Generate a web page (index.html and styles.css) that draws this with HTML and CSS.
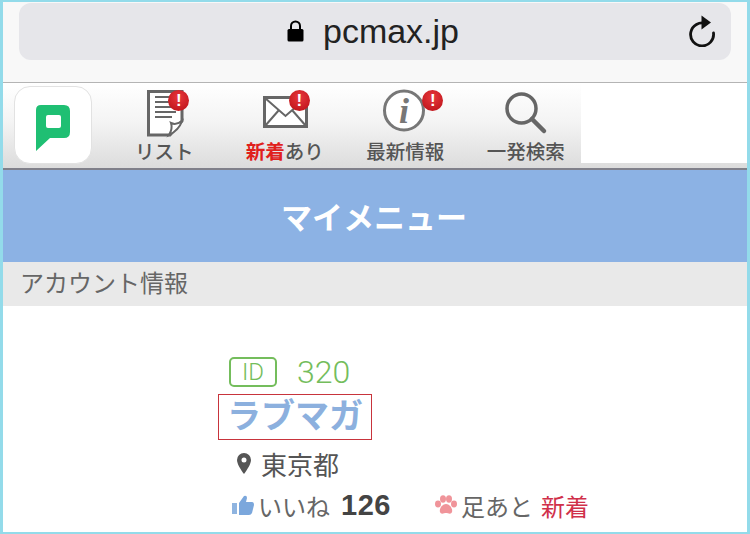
FILE: index.html
```html
<!DOCTYPE html>
<html lang="ja">
<head>
    <meta charset="UTF-8">
    <meta name="viewport" content="width=device-width, initial-scale=1.0">
    <title>pcmax.jp</title>
    <link rel="stylesheet" href="styles.css">
</head>
<body>
    <div class="frame">
        <div class="browser-bar">
            <div class="url-pill">
                <div class="url-text">
                    <svg class="lock" viewBox="0 0 17 22" width="17" height="22">
                        <path d="M4 10V6a4.500 4.500 0 0 1 9 0v4" fill="none" stroke="#000" stroke-width="2"/>
                        <rect x="0.500" y="9" width="16" height="12.500" rx="1.500" fill="#000"/>
                    </svg>
                    <span>pcmax.jp</span>
                </div>
                <svg class="reload" viewBox="0 0 28 32" width="28" height="32">
                    <path d="M18 8.600A11.500 11.500 0 1 0 25.500 18" fill="none" stroke="#111" stroke-width="2.800" stroke-linecap="round"/>
                    <path d="M13.500 0.500L23 7.500L13.500 14.500Z" fill="#111"/>
                </svg>
            </div>
        </div>
        <div class="nav">
            <div class="logo-tile">
                <svg class="logo" viewBox="0 0 34 47" width="34" height="47">
                    <path fill-rule="evenodd" d="M5 0H28Q34 0 34 6V27Q34 33 28 33H14L0 46V5Q0 0 5 0ZM12 10Q10 10 10 12V21Q10 23 12 23H23Q25 23 25 21V12Q25 10 23 10Z" fill="#1fbf73"/>
                </svg>
            </div>
            <div class="nav-items">
                <div class="nav-item">
                    <div class="nav-icon">
                        <svg viewBox="0 0 40 50" width="40" height="50">
                            <path d="M4.500 3.500H38V33L26 47H4.500Z" fill="#fff" stroke="#666" stroke-width="3"/>
                            <path d="M11 9H30M11 14H32M11 19H32M11 24H32M11 29H28" stroke="#666" stroke-width="2"/>
                            <path d="M25 47C28 42 28 38 27 35C31 37 34 36 38 33C36 39 31 44 25 47Z" fill="#fff" stroke="#666" stroke-width="2"/>
                        </svg>
                        <span class="alert alert-list">!</span>
                    </div>
                    <span class="nav-label">リスト</span>
                </div>
                <div class="nav-item">
                    <div class="nav-icon">
                        <svg viewBox="0 0 46 50" width="46" height="50">
                            <rect x="2.500" y="9.500" width="42" height="29" fill="#fff" stroke="#666" stroke-width="3"/>
                            <path d="M3 10L23.500 28L44 10M3 38L17 22M44 38L30 22" fill="none" stroke="#666" stroke-width="2"/>
                        </svg>
                        <span class="alert alert-mail">!</span>
                    </div>
                    <span class="nav-label"><b class="new-mark">新着</b>あり</span>
                </div>
                <div class="nav-item">
                    <div class="nav-icon">
                        <svg viewBox="0 0 46 50" width="46" height="50">
                            <circle cx="22" cy="22.500" r="19.500" fill="#fff" stroke="#777" stroke-width="3"/>
                            <text class="info-glyph" x="22" y="35" text-anchor="middle">i</text>
                        </svg>
                        <span class="alert alert-info">!</span>
                    </div>
                    <span class="nav-label">最新情報</span>
                </div>
                <div class="nav-item">
                    <div class="nav-icon">
                        <svg viewBox="0 0 46 50" width="46" height="50">
                            <circle cx="18.500" cy="20.500" r="14.500" fill="none" stroke="#666" stroke-width="3.500"/>
                            <path d="M29 31L41 43" stroke="#666" stroke-width="4.500" stroke-linecap="round"/>
                        </svg>
                    </div>
                    <span class="nav-label">一発検索</span>
                </div>
            </div>
            <div class="nav-blank"></div>
        </div>
        <div class="page-title">マイメニュー</div>
        <div class="section-title">アカウント情報</div>
        <div class="account">
            <div class="id-row">
                <span class="id-badge">ID</span>
                <span class="id-number">320</span>
            </div>
            <div class="name-box">ラブマガ</div>
            <div class="place-row">
                <svg viewBox="0 0 14 21" width="14" height="21">
                    <path fill-rule="evenodd" d="M7 0A7 7 0 0 1 14 7C14 11 10 17 7 21C4 17 0 11 0 7A7 7 0 0 1 7 0ZM7 4.500A2.500 2.500 0 1 0 7 9.500A2.500 2.500 0 1 0 7 4.500Z" fill="#555"/>
                </svg>
                <span>東京都</span>
            </div>
            <div class="stats-row">
                <svg viewBox="0 0 22 20" width="22" height="20">
                    <rect x="0" y="8" width="5" height="11" fill="#8fb4e0"/>
                    <path d="M7 8L12 1Q15 0 15 3L14 7H20Q22 7 22 10L20 18Q19 20 17 20H7Z" fill="#7ba7dc"/>
                </svg>
                <span class="stat-label">いいね</span>
                <b class="like-count">126</b>
                <svg class="paw" viewBox="0 0 24 20" width="24" height="20">
                    <g fill="#f0949a">
                        <ellipse cx="4" cy="9" rx="3" ry="3.400"/>
                        <ellipse cx="9" cy="4" rx="3" ry="3.700"/>
                        <ellipse cx="15" cy="4" rx="3" ry="3.700"/>
                        <ellipse cx="20" cy="9" rx="3" ry="3.400"/>
                        <path d="M12 9C16 9 19 14 18 17C17 20 14 18 12 18C10 18 7 20 6 17C5 14 8 9 12 9Z"/>
                    </g>
                </svg>
                <span class="stat-label">足あと</span>
                <span class="stat-new">新着</span>
            </div>
        </div>
    </div>
</body>
</html>
```

FILE: styles.css
```css
html, body {
    margin: 0;
    padding: 0;
}
body {
    width: 750px;
    height: 534px;
    overflow: hidden;
    background-color: #ffffff;
    font-family: "Noto Sans CJK JP", "Liberation Sans", sans-serif;
}
.frame {
    box-sizing: border-box;
    width: 750px;
    height: 534px;
    overflow: hidden;
    border: 3px solid #93dbea;
    border-top-width: 2px;
    border-bottom-width: 2px;
    background-color: #ffffff;
}
.browser-bar {
    box-sizing: border-box;
    height: 81px;
    padding: 1px 16px 0;
    background-color: #f8f8f8;
    border-bottom: 1px solid #b4b4b4;
}
.url-pill {
    position: relative;
    display: flex;
    align-items: center;
    justify-content: center;
    height: 57px;
    background-color: #e6e6ea;
    border-radius: 12px;
}
.url-text {
    display: flex;
    align-items: center;
    gap: 19px;
    margin-left: -4px;
    font-family: "Liberation Sans", sans-serif;
    font-size: 34px;
    color: #222222;
}
.lock {
    margin-top: -1px;
}
.reload {
    position: absolute;
    right: 15px;
    top: 12px;
}
.nav {
    display: flex;
    box-sizing: border-box;
    height: 87px;
    padding: 3px 0 0 11px;
    background: linear-gradient(#ffffff, #f4f4f4 45%, #dcdcdc);
    border-bottom: 2px solid #80808a;
}
.logo-tile {
    display: flex;
    align-items: center;
    justify-content: center;
    flex-shrink: 0;
    box-sizing: border-box;
    width: 78px;
    height: 78px;
    background-color: #ffffff;
    border: 1px solid #e2e2e2;
    border-radius: 16px;
}
.logo {
    margin-top: 6px;
}
.nav-items {
    display: flex;
    flex-shrink: 0;
    height: 81px;
    margin: -3px -5px 0 0;
    padding-left: 12px;
}
.nav-item {
    display: flex;
    flex-direction: column;
    align-items: center;
    box-sizing: border-box;
    width: 120.500px;
    height: 81px;
    padding-top: 5px;
    font-size: 19.500px;
    color: #555555;
}
.nav-icon {
    position: relative;
    height: 50px;
}
.nav-icon svg {
    display: block;
}
.nav-label {
    line-height: 26px;
    font-weight: 500;
    white-space: nowrap;
}
.nav-blank {
    flex: 1;
    height: 80px;
    margin-top: -3px;
    background-color: #ffffff;
}
.new-mark {
    color: #e0201c;
}
.info-glyph {
    font-family: "Liberation Serif", serif;
    font-style: italic;
    font-weight: bold;
    font-size: 36px;
    fill: #777777;
}
.alert {
    position: absolute;
    top: 2px;
    width: 21px;
    height: 21px;
    border-radius: 50%;
    background: radial-gradient(circle at 50% 35%, #e8383c, #b80f16);
    color: #ffffff;
    font-family: "Liberation Sans", sans-serif;
    font-weight: bold;
    font-size: 17px;
    line-height: 21px;
    text-align: center;
}
.alert-list {
    left: 24px;
}
.alert-mail {
    left: 27px;
}
.alert-info {
    left: 40px;
}
.page-title {
    height: 92px;
    padding-right: 2px;
    background-color: #8cb2e4;
    color: #ffffff;
    font-weight: bold;
    font-size: 31px;
    line-height: 92px;
    text-align: center;
}
.section-title {
    box-sizing: border-box;
    height: 44px;
    padding-left: 17px;
    background-color: #e9e9e9;
    color: #666666;
    font-size: 24px;
    line-height: 40px;
}
.account {
    padding: 51px 0 0 215px;
}
.id-row {
    display: flex;
    align-items: center;
    gap: 20px;
    height: 30px;
    margin-left: 11px;
    color: #74bd5c;
}
.id-badge {
    box-sizing: border-box;
    width: 48px;
    height: 30px;
    border: 2px solid #74bd5c;
    border-radius: 5px;
    font-family: "Roboto", "Liberation Sans", sans-serif;
    font-weight: 300;
    font-size: 24px;
    line-height: 26px;
    text-align: center;
}
.id-number {
    font-family: "Roboto", "Liberation Sans", sans-serif;
    font-weight: 300;
    font-size: 32px;
}
.name-box {
    box-sizing: border-box;
    width: 154px;
    height: 46px;
    margin-top: 7px;
    border: 1px solid #c8343c;
    color: #8cb0de;
    font-weight: bold;
    font-size: 34px;
    line-height: 38px;
    text-align: center;
    white-space: nowrap;
}
.place-row {
    display: flex;
    align-items: center;
    gap: 10px;
    height: 30px;
    margin: 8px 0 0 19px;
    color: #555555;
    font-size: 26px;
}
.stats-row {
    display: flex;
    align-items: center;
    height: 30px;
    margin: 12px 0 0 14px;
    color: #666666;
    font-size: 24px;
    white-space: nowrap;
}
.stat-label {
    margin-left: 4px;
}
.like-count {
    margin-left: 11px;
    font-family: "Liberation Sans", sans-serif;
    font-size: 29px;
    color: #444444;
    letter-spacing: 0.500px;
}
.paw {
    margin-left: 43px;
}
.stats-row .paw + .stat-label {
    margin-left: 3px;
}
.stat-new {
    margin-left: 8px;
    color: #d0304a;
}
```
